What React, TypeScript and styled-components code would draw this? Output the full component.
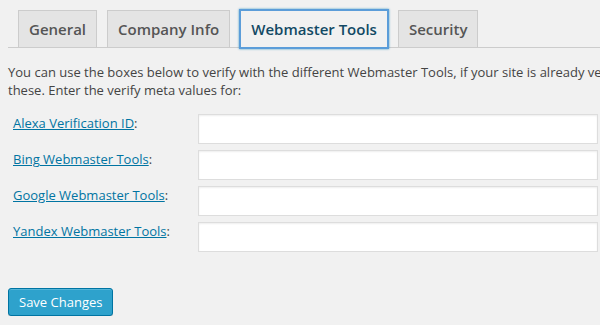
import * as React from "react"
import styled, { createGlobalStyle } from "styled-components"

const GlobalStyle = createGlobalStyle`
  html, body {
    margin: 0;
    background: #f1f1f1;
    overflow: hidden;
  }
  body {
    font-family: "Open Sans", sans-serif;
    font-size: 13px;
    color: #444;
  }
`

const Wrap = styled.div`
  padding: 10px 0 0 8px;
  width: 900px;
`

const TabBar = styled.h2`
  display: flex;
  margin: 0;
  padding: 0 0 0 10px;
  border-bottom: 1px solid #ccc;
  height: 37px;
  align-items: flex-start;
`

const Tab = styled.a<{ $active?: boolean }>`
  display: block;
  box-sizing: border-box;
  height: 38px;
  margin-right: 10px;
  padding: 6px 10px;
  font-size: 15px;
  line-height: 24px;
  font-weight: 600;
  text-decoration: none;
  border: 1px solid ${(p) => (p.$active ? "#5b9dd9" : "#ccc")};
  background: ${(p) => (p.$active ? "#f1f1f1" : "#e4e4e4")};
  color: ${(p) => (p.$active ? "#124964" : "#555")};
  box-shadow: ${(p) =>
    p.$active ? "0 0 0 1px #5b9dd9, 0 0 2px 1px rgba(30, 140, 190, 0.8)" : "none"};
`

const Intro = styled.p`
  margin: 15px 0 15px;
  line-height: 18.2px;
  white-space: nowrap;
`

const Form = styled.div`
  display: grid;
  grid-template-columns: 190px 400px;
  row-gap: 6px;
  margin-top: 15px;
`

const Label = styled.div`
  padding-left: 5px;
  line-height: 18px;
  white-space: nowrap;

  a {
    color: #0074a2;
    text-decoration: underline;
  }
`

const Input = styled.input`
  box-sizing: border-box;
  width: 400px;
  height: 30px;
  margin: 0;
  border: 1px solid #ddd;
  background: #fff;
  box-shadow: inset 0 1px 2px rgba(0, 0, 0, 0.07);
  font-family: inherit;
  font-size: 14px;
  outline: none;
`

const Submit = styled.p`
  margin: 36px 0 0;
`

const PrimaryButton = styled.button`
  box-sizing: border-box;
  height: 28px;
  padding: 0 10px 1px;
  font-family: "Open Sans", sans-serif;
  font-size: 13px;
  line-height: 26px;
  color: #fff;
  background: #2ea2cc;
  border: 1px solid #0074a2;
  border-radius: 3px;
  box-shadow: inset 0 1px 0 rgba(120, 200, 230, 0.5), 0 1px 0 rgba(0, 0, 0, 0.15);
  cursor: pointer;
`

const fields = [
  "Alexa Verification ID",
  "Bing Webmaster Tools",
  "Google Webmaster Tools",
  "Yandex Webmaster Tools",
]

const tabs = ["General", "Company Info", "Webmaster Tools", "Security"]

export default function App() {
  return (
    <Wrap>
      <GlobalStyle />
      <TabBar>
        {tabs.map((t) => (
          <Tab key={t} href="#" $active={t === "Webmaster Tools"}>
            {t}
          </Tab>
        ))}
      </TabBar>
      <Intro>
        You can use the boxes below to verify with the different Webmaster Tools, if your site is already verified, you can just forget about
        <br />
        these. Enter the verify meta values for:
      </Intro>
      <Form>
        {fields.map((f) => (
          <React.Fragment key={f}>
            <Label>
              <a href="#">{f}</a>:
            </Label>
            <Input type="text" />
          </React.Fragment>
        ))}
      </Form>
      <Submit>
        <PrimaryButton type="button">Save Changes</PrimaryButton>
      </Submit>
    </Wrap>
  )
}
